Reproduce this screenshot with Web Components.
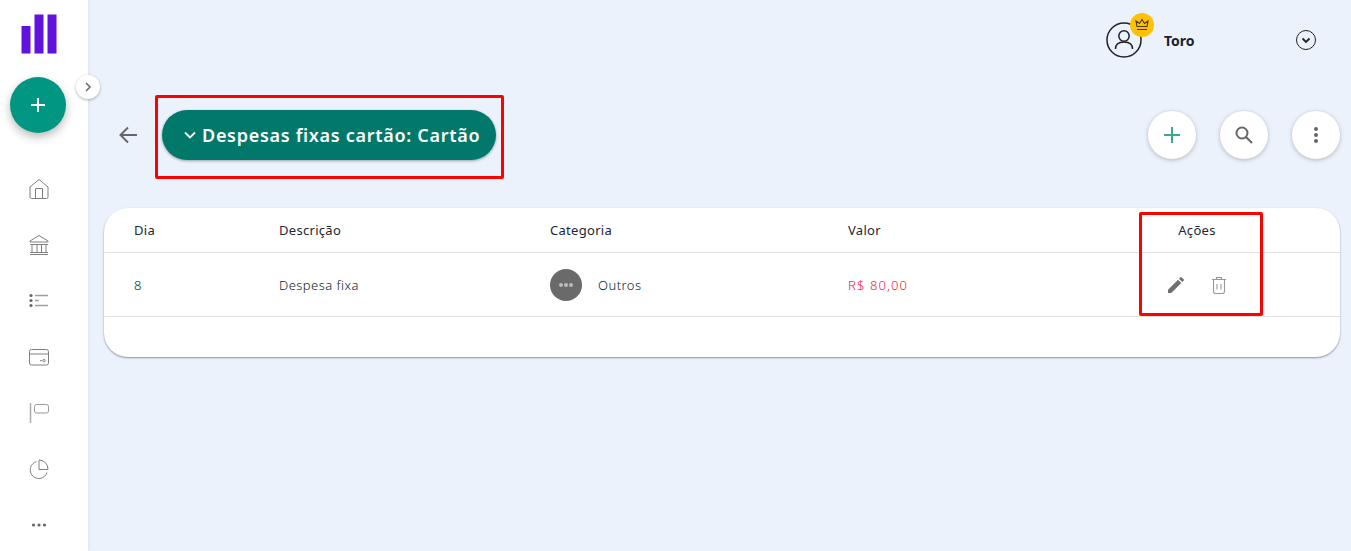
<!DOCTYPE html>
<html lang="pt-BR">
<head>
<meta charset="utf-8">
<title>Despesas fixas</title>
<style>
	html, body {
		margin: 0;
		height: 100%;
	}

	body {
		background: #ebf2fb;
		font-family: "Noto Sans", "DejaVu Sans", sans-serif;
		color: #1b2733;
		overflow: hidden;
	}
</style>
</head>
<body>
<app-shell>
	<side-nav slot="nav"></side-nav>
	<top-bar slot="top"></top-bar>
	<page-header slot="main"></page-header>
	<expense-table slot="main"></expense-table>
</app-shell>

<script>
class AppShell extends HTMLElement {
	constructor() {
		super();
		this.attachShadow({ mode: 'open' });
		this.shadowRoot.innerHTML = `
		<style>
		:host {
			display: grid;
			grid-template-columns: 88px 1fr;
			height: 551px;
		}

		.main {
			display: flex;
			flex-direction: column;
			padding: 0 11px 0 16px;
			min-width: 0;
		}
		</style>
		<slot name="nav"></slot>
		<div class="main">
			<slot name="top"></slot>
			<slot name="main"></slot>
		</div>
		`;
	}
}

class SideNav extends HTMLElement {
	constructor() {
		super();
		this.attachShadow({ mode: 'open' });
		this.shadowRoot.innerHTML = `
		<style>
		:host {
			display: flex;
			flex-direction: column;
			align-items: center;
			position: relative;
			box-sizing: border-box;
			padding-right: 12px;
			background: #fff;
			box-shadow: 1px 0 3px rgba(60, 80, 110, .08);
			height: 551px;
		}

		.logo {
			display: block;
			margin: 14px 0 0 2px;
		}

		.fab {
			width: 56px;
			height: 56px;
			margin-top: 23px;
			border-radius: 50%;
			background: #009682;
			box-shadow: 0 4px 10px rgba(0, 0, 0, .28);
			display: flex;
			align-items: center;
			justify-content: center;
		}

		.toggle {
			position: absolute;
			left: 76px;
			top: 75px;
			width: 24px;
			height: 24px;
			border-radius: 50%;
			background: #fff;
			box-shadow: 0 1px 3px rgba(0, 0, 0, .3);
			display: flex;
			align-items: center;
			justify-content: center;
		}

		nav {
			display: flex;
			flex-direction: column;
			align-items: center;
			gap: 32px;
			margin: 44px 0 0 2px;
		}

		nav svg {
			display: block;
			fill: none;
			stroke: #808080;
			stroke-width: 1;
		}
		</style>
		<svg class="logo" width="36" height="40" viewBox="0 0 36 40">
			<rect x="0.5" y="12" width="9" height="27.500" fill="#6212de"/>
			<rect x="13.500" y="0.500" width="9" height="39" fill="#6212de"/>
			<rect x="26.500" y="0.500" width="9" height="39" fill="#6212de"/>
		</svg>
		<div class="fab">
			<svg width="14" height="14" viewBox="0 0 14 14"><path d="M7 0v14M0 7h14" stroke="#fff" stroke-width="2"/></svg>
		</div>
		<div class="toggle">
			<svg width="10" height="10" viewBox="0 0 10 10" fill="none"><path d="M3 1l4 4-4 4" stroke="#666" stroke-width="1.500"/></svg>
		</div>
		<nav>
			<svg width="24" height="24" viewBox="0 0 24 24">
				<path d="M12 2.500L21 10V20a1.500 1.500 0 0 1-1.500 1.500h-15A1.500 1.500 0 0 1 3 20V10z"/>
				<path d="M8.500 21.500V11.500h7V21.500"/>
			</svg>
			<svg width="24" height="24" viewBox="0 0 24 24">
				<path d="M3 8L12 2.500 21 8v1H3z"/>
				<path d="M3 11.500h18M5 11.500v7.500M10 11.500v7.500M14.500 11.500v7.500M19 11.500v7.500M3 19.500h18M3 21.500h18"/>
			</svg>
			<svg width="24" height="24" viewBox="0 0 24 24">
				<circle cx="4" cy="6.500" r="1.600" fill="#666" stroke="none"/>
				<circle cx="4" cy="11.500" r="1.600" fill="#666" stroke="none"/>
				<circle cx="4" cy="16.500" r="1.600" fill="#666" stroke="none"/>
				<path d="M8 6.500h13M8 11.500h4M8 16.500h13" stroke="#a0a0a0" stroke-width="1.300"/>
			</svg>
			<svg width="24" height="24" viewBox="0 0 24 24">
				<rect x="2.500" y="4.500" width="19" height="15.500" rx="2"/>
				<path d="M2.500 9h19M13 15.700h2"/>
				<circle cx="17" cy="15.700" r="1.200"/>
			</svg>
			<svg width="24" height="24" viewBox="0 0 24 24">
				<path d="M3.500 2v20" stroke="#aaa" stroke-width="1.500"/>
				<rect x="7.500" y="3.500" width="14" height="8.500" rx="2" stroke="#999"/>
			</svg>
			<svg width="24" height="24" viewBox="0 0 24 24">
				<path d="M9.500 4.600A8.600 8.600 0 1 0 20 15.500"/>
				<path d="M12 3a9 9 0 0 1 9 9.500h-9z"/>
			</svg>
			<svg width="24" height="24" viewBox="0 0 24 24">
				<circle cx="6.500" cy="12" r="1.600" fill="#666" stroke="none"/>
				<circle cx="12" cy="12" r="1.600" fill="#666" stroke="none"/>
				<circle cx="17.500" cy="12" r="1.600" fill="#666" stroke="none"/>
			</svg>
		</nav>
		`;
	}
}

class TopBar extends HTMLElement {
	constructor() {
		super();
		this.attachShadow({ mode: 'open' });
		this.shadowRoot.innerHTML = `
		<style>
		:host {
			display: flex;
			align-items: center;
			justify-content: flex-end;
			height: 80px;
			padding-right: 24px;
		}

		.avatar {
			position: relative;
			width: 36px;
			height: 36px;
			margin-right: 22px;
		}

		.crown {
			position: absolute;
			left: 24px;
			top: -9px;
			width: 24px;
			height: 24px;
			border-radius: 50%;
			background: #ffc107;
			display: flex;
			align-items: center;
			justify-content: center;
		}

		.name {
			font-size: 14px;
			font-weight: 700;
			color: #1a2230;
			width: 132px;
		}

		svg {
			display: block;
		}
		</style>
		<div class="avatar">
			<svg width="36" height="36" viewBox="0 0 36 36" fill="none" stroke="#222" stroke-width="1.500">
				<circle cx="18" cy="18" r="17"/>
				<circle cx="18" cy="14" r="5.200"/>
				<path d="M9.500 27c0-5 4-7 8.500-7s8.500 2 8.500 7"/>
			</svg>
			<div class="crown">
				<svg width="16" height="14" viewBox="0 0 16 14" fill="none" stroke="#4a3a10" stroke-width="1.100">
					<path d="M3 8.500L2 3l3.500 2.500L8 1.500l2.500 4L14 3l-1 5.500z"/>
					<path d="M3 11.500h10"/>
				</svg>
			</div>
		</div>
		<span class="name">Toro</span>
		<svg width="20" height="20" viewBox="0 0 20 20" fill="none" stroke="#222">
			<circle cx="10" cy="10" r="9.500"/>
			<path d="M6.500 8.500L10 12l3.500-3.500" stroke-width="1.800"/>
		</svg>
		`;
	}
}

class RoundButton extends HTMLElement {
	constructor() {
		super();
		this.attachShadow({ mode: 'open' });
		this.shadowRoot.innerHTML = `
		<style>
		:host {
			display: flex;
			align-items: center;
			justify-content: center;
			width: 48px;
			height: 48px;
			border-radius: 50%;
			background: #fff;
			box-shadow: 0 1px 4px rgba(0, 0, 0, .25);
		}
		</style>
		<slot></slot>
		`;
	}
}

class PageHeader extends HTMLElement {
	constructor() {
		super();
		this.attachShadow({ mode: 'open' });
		this.shadowRoot.innerHTML = `
		<style>
		:host {
			display: flex;
			align-items: center;
			position: relative;
			height: 50px;
			margin-top: 30px;
		}

		.back {
			display: block;
			margin-left: 15px;
			margin-right: 25px;
		}

		.pill {
			display: flex;
			align-items: center;
			height: 50px;
			width: 334px;
			box-sizing: border-box;
			padding-left: 22px;
			border-radius: 25px;
			background: #00786a;
			box-shadow: 0 1px 3px rgba(0, 0, 0, .35);
			color: #fff;
			font-size: 18px;
			font-weight: 600;
			letter-spacing: .7px;
			white-space: nowrap;
		}

		.pill svg {
			margin-right: 6px;
		}

		.outline {
			position: absolute;
			left: 51px;
			top: -15px;
			width: 349px;
			height: 84px;
			box-sizing: border-box;
			border: 3px solid #f00;
			border-radius: 2px;
		}

		.actions {
			margin-left: auto;
			display: flex;
			gap: 24px;
		}
		</style>
		<svg class="back" width="18" height="18" viewBox="0 0 18 18" fill="none" stroke="#666" stroke-width="2"><path d="M18 9H2M9 1.500L1.500 9 9 16.500"/></svg>
		<div class="pill">
			<svg width="12" height="8" viewBox="0 0 12 8" fill="none" stroke="#fff" stroke-width="1.800"><path d="M1 1.500l5 5 5-5"/></svg>
			Despesas fixas cartão: Cartão
		</div>
		<div class="outline"></div>
		<div class="actions">
			<round-button>
				<svg width="16" height="16" viewBox="0 0 16 16"><path d="M8 0v16M0 8h16" stroke="#3ba88f" stroke-width="2"/></svg>
			</round-button>
			<round-button>
				<svg width="18" height="18" viewBox="0 0 18 18" fill="none" stroke="#666" stroke-width="2"><circle cx="7" cy="7" r="5.500"/><path d="M11 11l6 6"/></svg>
			</round-button>
			<round-button>
				<svg width="4" height="16" viewBox="0 0 4 16" fill="#666"><circle cx="2" cy="2" r="2"/><circle cx="2" cy="8" r="2"/><circle cx="2" cy="14" r="2"/></svg>
			</round-button>
		</div>
		`;
	}
}

class ExpenseTable extends HTMLElement {
	constructor() {
		super();
		this.attachShadow({ mode: 'open' });
		this.shadowRoot.innerHTML = `
		<style>
		:host {
			display: block;
			position: relative;
			margin-top: 48px;
			height: 149px;
			box-sizing: border-box;
			background: #fff;
			border-radius: 24px;
			box-shadow: 0 1px 2px rgba(0, 0, 0, .4);
			font-size: 13px;
			letter-spacing: .3px;
		}

		.row {
			display: grid;
			grid-template-columns: 145px 271px 298px 302px 94px;
			padding-left: 30px;
			align-items: center;
			border-bottom: 1px solid #e0e0e0;
		}

		.head {
			height: 44px;
			color: #1b2733;
		}

		.body {
			height: 63px;
			color: #0c1c30;
			font-weight: 300;
			letter-spacing: .45px;
		}

		.center {
			text-align: center;
		}

		.category {
			display: flex;
			align-items: center;
			gap: 16px;
		}

		.badge {
			width: 32px;
			height: 32px;
			border-radius: 50%;
			background: #6a6a6a;
			display: flex;
			align-items: center;
			justify-content: center;
		}

		.value {
			color: #f0203c;
			letter-spacing: 1.100px;
		}

		.icons {
			display: flex;
			justify-content: center;
			align-items: center;
			gap: 27px;
		}

		svg {
			display: block;
		}

		.outline {
			position: absolute;
			left: 1035px;
			top: 4px;
			width: 124px;
			height: 104px;
			box-sizing: border-box;
			border: 3px solid #f00;
			border-radius: 2px;
		}
		</style>
		<div class="row head">
			<span>Dia</span>
			<span>Descrição</span>
			<span>Categoria</span>
			<span>Valor</span>
			<span class="center">Ações</span>
		</div>
		<div class="row body">
			<span>8</span>
			<span>Despesa fixa</span>
			<div class="category">
				<div class="badge">
					<svg width="14" height="4" viewBox="0 0 14 4" fill="#bbb"><circle cx="2" cy="2" r="2"/><circle cx="7" cy="2" r="2"/><circle cx="12" cy="2" r="2"/></svg>
				</div>
				<span>Outros</span>
			</div>
			<span class="value">R$ 80,00</span>
			<div class="icons">
				<svg width="16" height="16" viewBox="0 0 16 16" fill="#707070"><path d="M0 16v-3.300L10 2.700l3.300 3.300L3.300 16zM11 1.700L12.300.4a1 1 0 0 1 1.400 0l1.900 1.900a1 1 0 0 1 0 1.400L14.300 5z"/></svg>
				<svg width="16" height="18" viewBox="0 0 16 18" fill="none" stroke="#999" stroke-width="1.100"><path d="M1 3.500h14M5.500 3.500V1.500h5v2M2.500 3.500V15.500a2 2 0 0 0 2 2h7a2 2 0 0 0 2-2V3.500M6 8v5.500M10 8v5.500"/></svg>
			</div>
		</div>
		<div class="outline"></div>
		`;
	}
}

customElements.define('app-shell', AppShell);
customElements.define('side-nav', SideNav);
customElements.define('top-bar', TopBar);
customElements.define('round-button', RoundButton);
customElements.define('page-header', PageHeader);
customElements.define('expense-table', ExpenseTable);
</script>
</body>
</html>
